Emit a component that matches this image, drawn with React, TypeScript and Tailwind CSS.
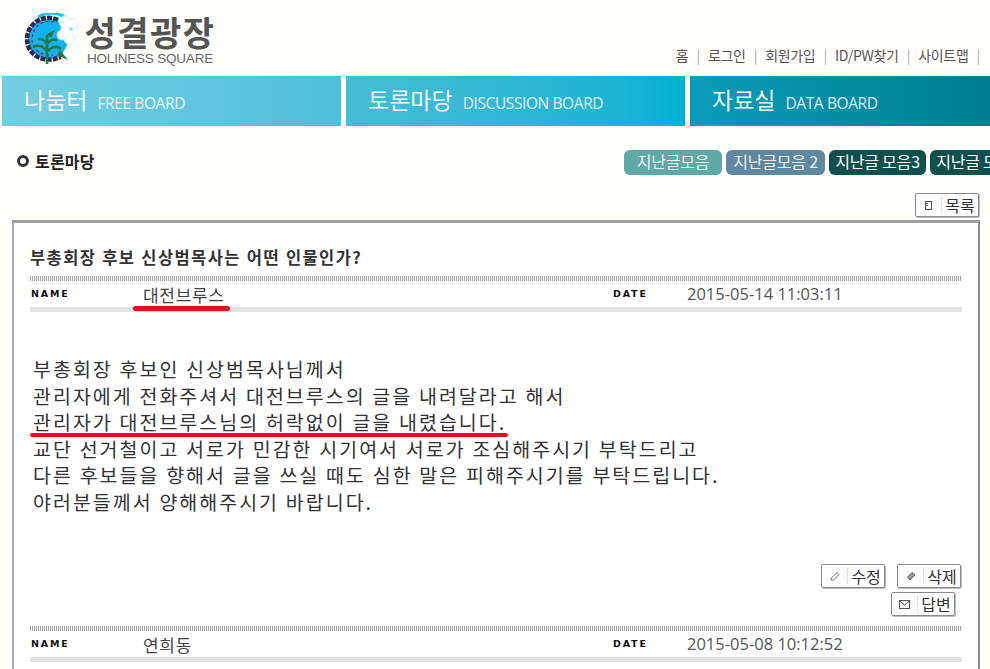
import React from "react";

const KR = "font-['Noto_Sans_CJK_KR','Noto_Sans',sans-serif]";

function Logo() {
  return (
    <svg width="55" height="52" viewBox="0 0 55 52" className="shrink-0">
      <circle cx="24" cy="26" r="20" fill="#12b2ee" />
      <path d="M14 4 C22 -1 34 -1 42 5" fill="none" stroke="#27bdf0" strokeWidth="3" />
      <g fill="#fff" stroke="#bfe9f8" strokeWidth="0.6">
        <circle cx="41" cy="9" r="6" /><circle cx="49" cy="11" r="5.5" /><circle cx="50" cy="20" r="5" />
        <circle cx="45" cy="26" r="5" /><circle cx="38" cy="22" r="5" />
      </g>
      <circle cx="44" cy="16" r="7.5" fill="#fff" />
      <circle cx="47" cy="16" r="2" fill="#a5def2" />
      <path d="M34 7 C19 0 3 11 3 26 C3 40 16 49 30 46 L37 44" fill="none" stroke="#30284f" strokeWidth="4.5" strokeDasharray="5 1.2" />
      <path d="M30 9 C17 6 8 15 8 27 C9 37 17 43 29 42" fill="none" stroke="#8a2f68" strokeWidth="1.5" strokeDasharray="3 2.5" />
      <path d="M23 51 L23 22 M23 38 C18 32 13 32 9 34 M23 39 C28 33 33 33 37 36 M23 31 C20 26 17 26 14 26 M23 31 C27 26 30 26 33 27" fill="none" stroke="#1f7a4a" strokeWidth="2.6" />
      <path d="M23 21 L31 17 L27 25 Z M36 37 L44 47 L33 42 Z" fill="#1f7a4a" />
    </svg>
  );
}

function Tab({ ko, en, cls, w }: { ko: string; en: string; cls: string; w: string }) {
  return (
    <div className={`${w} ${cls} h-[50px] flex items-center gap-[10px] pl-[22px] pb-[4px] shrink-0`}>
      <span className={`text-[23px] leading-none text-white/95 ${KR}`}>{ko}</span>
      <span className="text-[15.5px] leading-none mt-[9px] tracking-[-0.4px] text-white/85 font-['Open_Sans',sans-serif]">{en}</span>
    </div>
  );
}

function Pill({ t, cls, w }: { t: string; cls: string; w: string }) {
  return (
    <div className={`${w} ${cls} h-[25px] pb-[3px] rounded-[6px] shrink-0 flex items-center justify-center whitespace-nowrap text-[16px] tracking-[-0.2px] ${KR}`}>{t}</div>
  );
}

function Btn({ t, w, icon }: { t: string; w: string; icon: React.ReactNode }) {
  return (
    <div className={`${w} h-[24px] flex items-center border border-[#8a8a8a] rounded-[2px] bg-white shadow-[1px_1px_0_#bbb] ${KR}`}>
      <span className="w-[26px] flex justify-center border-r border-dotted border-[#ccc] h-[16px] items-center shrink-0">{icon}</span>
      <span className="flex-1 text-center text-[16px] leading-none text-[#333]">{t}</span>
    </div>
  );
}

const Dotted = () => (
  <div className="h-[5px] bg-[repeating-linear-gradient(90deg,#a8a8a8_0,#a8a8a8_1px,#f4f4f4_1px,#f4f4f4_2px)]" />
);

function Meta({ name, date, label }: { name: string; date: string; label?: React.ReactNode }) {
  return (
    <div className="relative">
      <div className="flex items-center h-[26px]">
        <span className="w-[113px] pl-[1px] text-[9.5px] font-bold tracking-[1.8px] text-[#111] font-['DejaVu_Sans',sans-serif] leading-none">NAME</span>
        <span className={`w-[470px] text-[17px] leading-none tracking-[0.7px] text-[#444] ${KR}`}>{name}</span>
        <span className="w-[74px] text-[9.5px] font-bold tracking-[1.8px] text-[#111] font-['DejaVu_Sans',sans-serif] leading-none">DATE</span>
        <span className="text-[16.5px] leading-none text-[#555] font-['Open_Sans',sans-serif]">{date}</span>
      </div>
      <div className="h-[5px] bg-[#e2e2e2]" />
      {label}
    </div>
  );
}

export default function App() {
  return (
    <div className={`w-[990px] h-[669px] overflow-hidden bg-[#fffefa] ${KR}`}>
      <header className="h-[76px] flex justify-between pl-[24px]">
        <div className="flex items-start pt-[13px] gap-[6px]">
          <Logo />
          <div className="flex flex-col items-center w-[130px]">
            <div className="text-[34px] leading-[38px] font-bold tracking-[1.5px] text-[#555] whitespace-nowrap">성결광장</div>
            <div className="text-[13.5px] leading-[14px] mt-[1px] text-[#666] font-['Liberation_Sans',sans-serif] whitespace-nowrap tracking-[-0.2px]">HOLINESS SQUARE</div>
          </div>
        </div>
        <nav className="flex items-center h-[20px] mt-[45px] pr-[10px] text-[14px] leading-none text-[#555] whitespace-nowrap tracking-[-0.3px]">
          <span>홈</span><span className="mx-[8px] text-[#aaa]">|</span>
          <span>로그인</span><span className="mx-[8px] text-[#aaa]">|</span>
          <span>회원가입</span><span className="mx-[8px] text-[#aaa]">|</span>
          <span>ID/PW찾기</span><span className="mx-[8px] text-[#aaa]">|</span>
          <span>사이트맵</span><span className="ml-[8px] text-[#aaa]">|</span>
        </nav>
      </header>

      <div className="flex gap-[5px] pl-[2px]">
        <Tab ko="나눔터" en="FREE BOARD" w="w-[339px]" cls="bg-gradient-to-r from-[#74cde0] to-[#4dc0d9]" />
        <Tab ko="토론마당" en="DISCUSSION BOARD" w="w-[339px]" cls="bg-gradient-to-r from-[#45bdd7] to-[#00b0d2]" />
        <Tab ko="자료실" en="DATA BOARD" w="w-[339px]" cls="bg-gradient-to-r from-[#0a9cbb] to-[#007a8a]" />
      </div>

      <div className="h-[67px] flex items-start justify-between pt-[24px] pl-[17px] relative">
        <div className="flex items-center gap-[6px] h-[25px] pb-[3px]">
          <span className="w-[12px] h-[12px] rounded-full border-[3px] border-[#333] bg-white" />
          <span className="text-[16px] font-bold text-[#222] tracking-[0.2px]">토론마당</span>
        </div>
        <div className="flex gap-[4px] w-[366px] overflow-hidden shrink-0">
          <Pill t="지난글모음" w="w-[98px]" cls="bg-[#5fa8a6] text-[#eef7f6]" />
          <Pill t="지난글모음 2" w="w-[99px]" cls="bg-[#5f88a0] text-[#eaf1f5]" />
          <Pill t="지난글 모음3" w="w-[97px]" cls="bg-[#0c4f4c] text-white" />
          <Pill t="지난글 모음4" w="w-[97px]" cls="bg-[#0c4f4c] text-white" />
        </div>
      </div>

      <div className="flex justify-end pr-[11px] h-[27px]">
        <Btn t="목록" w="w-[64px]" icon={
          <svg width="11" height="11" viewBox="0 0 11 11" fill="none" stroke="#555"><rect x="2.5" y="1.5" width="6" height="8" /><path d="M5 3.5H3M5 5.5H3" /></svg>
        } />
      </div>

      <main className="ml-[12px] mr-[10px] h-[460px] border-l-2 border-r-2 border-t-[3px] border-l-[#aaa] border-r-[#8c8c8c] border-t-[#a0a0a0] bg-white px-[16px] relative">
        <h1 className="text-[16.5px] leading-[20px] font-bold text-[#333] mt-[24px] tracking-[1.4px] [word-spacing:0.8px]">부총회장 후보 신상범목사는 어떤 인물인가?</h1>
        <div className="mt-[9px]"><Dotted /></div>
        <Meta name="대전브루스" date="2015-05-14 11:03:11" label={
          <span className="absolute left-[103px] w-[97px] top-[25px] h-[5px] rounded-full bg-[#e60d20]" />
        } />
        <div className="mt-[44px] pl-[3px] text-[19.5px] leading-[26.5px] text-[#333] relative tracking-[2px] [word-spacing:0.4px]">
          <p>부총회장 후보인 신상범목사님께서</p>
          <p>관리자에게 전화주셔서 대전브루스의 글을 내려달라고 해서</p>
          <p>관리자가 대전브루스님의 허락없이 글을 내렸습니다.</p>
          <p>교단 선거철이고 서로가 민감한 시기여서 서로가 조심해주시기 부탁드리고</p>
          <p>다른 후보들을 향해서 글을 쓰실 때도 심한 말은 피해주시기를 부탁드립니다.</p>
          <p>야러분들께서 양해해주시기 바랍니다.</p>
          <span className="absolute left-0 w-[478px] top-[77px] h-[4px] rounded-full bg-[#e60d20]" />
        </div>
        <div className="mt-[49px] flex flex-col items-end gap-[4px] pr-[1px]">
          <div className="flex gap-[12px]">
            <Btn t="수정" w="w-[64px]" icon={
              <svg width="12" height="12" viewBox="0 0 12 12" fill="none" stroke="#777"><path d="M2.5 8 L8 2.5 L10 4.5 L4.5 10 L2 10 Z" /></svg>
            } />
            <Btn t="삭제" w="w-[64px]" icon={
              <svg width="12" height="12" viewBox="0 0 12 12" fill="#999" stroke="#666"><path d="M2.5 7 L7 2.5 L10 5 L5 10 Z" /></svg>
            } />
          </div>
          <div className="pr-[6px]">
            <Btn t="답변" w="w-[64px]" icon={
              <svg width="13" height="11" viewBox="0 0 13 11" fill="none" stroke="#555"><rect x="1.5" y="1.5" width="10" height="8" /><path d="M1.5 2 L6.5 6 L11.5 2" /></svg>
            } />
          </div>
        </div>
        <div className="mt-[10px]"><Dotted /></div>
        <Meta name="연희동" date="2015-05-08 10:12:52" />
      </main>
    </div>
  );
}
